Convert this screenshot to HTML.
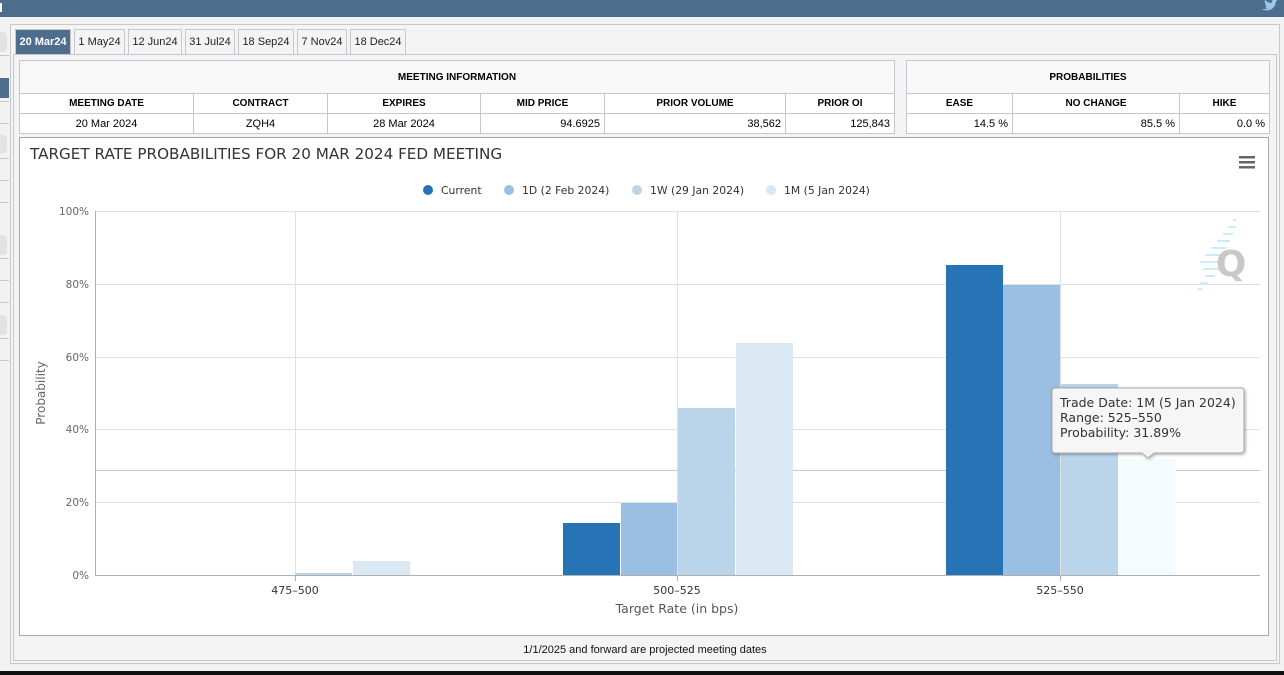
<!DOCTYPE html>
<html><head><meta charset="utf-8"><style>
*{margin:0;padding:0;box-sizing:border-box}
body{width:1284px;height:675px;background:#f2f2f2;position:relative;overflow:hidden;font-family:"Liberation Sans",Arial,sans-serif;color:#000}
.abs{position:absolute}
.tab{position:absolute;top:29px;height:25px;border:1px solid #c8c8cc;border-bottom:none;background:#f4f4f4;font-size:11px;line-height:24px;text-align:center;color:#222}
.tab.on{background:#4e6d8c;color:#fff;font-weight:bold}
table{border-collapse:collapse;position:absolute;background:#fff;font-size:11px}
td{border:1px solid #c6c6cc;text-align:center;height:20px;padding:0 4px}
.h td{font-weight:bold;font-size:10px}
.r{text-align:right}
</style></head><body>
<div class="abs" style="left:0;top:0;width:1284px;height:17px;background:#4e6d8c"></div>
<div class="abs" style="left:0;top:3px;width:2px;height:9px;background:#fff"></div>
<svg class="abs" style="left:1261px;top:0" width="18" height="12" viewBox="0 0 18 12"><path d="M1 9c3 2 8 2 11-1 2-2 3-5 3-7l2-1-2 0c-1-1-3-1-4 1-1 1 0 2 0 2-3 0-5-1-7-3-1 2 0 3 1 4H4c0 1 1 2 2 3H4c1 1 2 1 3 1-2 1-4 1-6 1z" fill="#9cc7ea"/></svg>
<div class="abs" style="left:0;top:32px;width:7px;height:20px;background:#e2e2e2;border-radius:0 4px 4px 0"></div>
<div class="abs" style="left:0;top:55px;width:9px;height:1px;background:#c8c8c8"></div>
<div class="abs" style="left:0;top:78px;width:9px;height:20px;background:#4e6d8c"></div>
<div class="abs" style="left:0;top:101px;width:9px;height:1px;background:#c8c8c8"></div>
<div class="abs" style="left:0;top:123px;width:9px;height:1px;background:#c8c8c8"></div>
<div class="abs" style="left:0;top:135px;width:7px;height:18px;background:#e2e2e2;border-radius:0 4px 4px 0"></div>
<div class="abs" style="left:0;top:158px;width:9px;height:1px;background:#c8c8c8"></div>
<div class="abs" style="left:0;top:180px;width:9px;height:1px;background:#c8c8c8"></div>
<div class="abs" style="left:0;top:202px;width:9px;height:1px;background:#c8c8c8"></div>
<div class="abs" style="left:0;top:235px;width:7px;height:20px;background:#e2e2e2;border-radius:0 4px 4px 0"></div>
<div class="abs" style="left:0;top:258px;width:9px;height:1px;background:#c8c8c8"></div>
<div class="abs" style="left:0;top:280px;width:9px;height:1px;background:#c8c8c8"></div>
<div class="abs" style="left:0;top:302px;width:9px;height:1px;background:#c8c8c8"></div>
<div class="abs" style="left:0;top:315px;width:7px;height:20px;background:#e2e2e2;border-radius:0 4px 4px 0"></div>
<div class="abs" style="left:0;top:338px;width:9px;height:1px;background:#c8c8c8"></div>
<div class="abs" style="left:0;top:360px;width:9px;height:1px;background:#c8c8c8"></div>
<div class="abs" style="left:10px;top:24px;width:1270px;height:640px;border:1px solid #c8c8cc;background:#f4f4f4"></div>
<div class="abs" style="left:13px;top:54px;width:1264px;height:607px;border:1px solid #c8c8cc;background:#f4f4f4"></div>
<div class="tab on" style="left:15px;width:56px">20 Mar24</div>
<div class="tab" style="left:74px;width:51px">1 May24</div>
<div class="tab" style="left:128px;width:54px">12 Jun24</div>
<div class="tab" style="left:185px;width:50px">31 Jul24</div>
<div class="tab" style="left:238px;width:56px">18 Sep24</div>
<div class="tab" style="left:297px;width:50px">7 Nov24</div>
<div class="tab" style="left:350px;width:56px">18 Dec24</div>
<table style="left:19px;top:60px;width:876px">
<tr class="h"><td colspan="6" style="height:33px;background:#f8f8f8">MEETING INFORMATION</td></tr>
<tr class="h"><td style="width:174px">MEETING DATE</td><td style="width:134px">CONTRACT</td><td style="width:153px">EXPIRES</td><td style="width:124px">MID PRICE</td><td style="width:181px">PRIOR VOLUME</td><td>PRIOR OI</td></tr>
<tr><td>20 Mar 2024</td><td>ZQH4</td><td>28 Mar 2024</td><td class="r">94.6925</td><td class="r">38,562</td><td class="r">125,843</td></tr>
</table>
<table style="left:906px;top:60px;width:364px">
<tr class="h"><td colspan="3" style="height:33px;background:#f8f8f8">PROBABILITIES</td></tr>
<tr class="h"><td style="width:106px">EASE</td><td style="width:167px">NO CHANGE</td><td>HIKE</td></tr>
<tr><td class="r">14.5 %</td><td class="r">85.5 %</td><td class="r">0.0 %</td></tr>
</table>
<div class="abs" style="left:19px;top:137px;width:1250px;height:499px;background:#fff;border:1px solid #a8a8a8"></div>
<svg class="abs" style="left:0;top:0" width="1284" height="675" font-family="DejaVu Sans, sans-serif">
<text x="30" y="159" font-size="15.2" fill="#333">TARGET RATE PROBABILITIES FOR 20 MAR 2024 FED MEETING</text>
<g fill="#666"><rect x="1239" y="156" width="16" height="2.5"/><rect x="1239" y="161" width="16" height="2.5"/><rect x="1239" y="166" width="16" height="2.5"/></g>
<g font-size="10.8" fill="#333">
<circle cx="428" cy="190" r="5" fill="#2673b5"/><text x="441" y="194">Current</text>
<circle cx="509" cy="190" r="5" fill="#9bbfe3"/><text x="522" y="194">1D (2 Feb 2024)</text>
<circle cx="637" cy="190" r="5" fill="#bad5ea"/><text x="650" y="194">1W (29 Jan 2024)</text>
<circle cx="771" cy="190" r="5" fill="#dae8f4"/><text x="784" y="194">1M (5 Jan 2024)</text>
</g>
<g stroke="#e0e0e0" stroke-width="1">
<line x1="95" y1="211.5" x2="1260" y2="211.5"/><line x1="95" y1="284.5" x2="1260" y2="284.5"/><line x1="95" y1="357.5" x2="1260" y2="357.5"/><line x1="95" y1="429.5" x2="1260" y2="429.5"/><line x1="95" y1="502.5" x2="1260" y2="502.5"/>
<line x1="295.5" y1="211" x2="295.5" y2="575"/><line x1="677.5" y1="211" x2="677.5" y2="575"/><line x1="1060.5" y1="211" x2="1060.5" y2="575"/>
</g>
<line x1="95" y1="470.5" x2="1260" y2="470.5" stroke="#c8c8c8"/>
<g fill="#666" font-size="10.5" text-anchor="end">
<text x="89" y="215">100%</text><text x="89" y="288">80%</text><text x="89" y="361">60%</text><text x="89" y="433">40%</text><text x="89" y="506">20%</text><text x="89" y="579">0%</text></g>
<text transform="translate(45,393) rotate(-90)" text-anchor="middle" font-size="12" fill="#666">Probability</text>
<rect x="295" y="573" width="57" height="2" fill="#bad5ea"/>
<rect x="353" y="561" width="57" height="14" fill="#dae8f4"/>
<rect x="563" y="523" width="57" height="52" fill="#2673b5"/>
<rect x="621" y="503" width="56" height="72" fill="#9bbfe3"/>
<rect x="678" y="408" width="57" height="167" fill="#bad5ea"/>
<rect x="736" y="343" width="57" height="232" fill="#dae8f4"/>
<rect x="946" y="265" width="57" height="310" fill="#2673b5"/>
<rect x="1003" y="285" width="57" height="290" fill="#9bbfe3"/>
<rect x="1061" y="384" width="57" height="191" fill="#bad5ea"/>
<rect x="1118" y="459" width="58" height="116" fill="#f5fcff"/>
<line x1="95.5" y1="211" x2="95.5" y2="575" stroke="#b0b0b0"/>
<line x1="95" y1="575.5" x2="1260" y2="575.5" stroke="#b0b0b0"/>
<g stroke="#b0b0b0"><line x1="295.5" y1="575" x2="295.5" y2="581"/><line x1="677.5" y1="575" x2="677.5" y2="581"/><line x1="1060.5" y1="575" x2="1060.5" y2="581"/></g>
<g font-size="11" fill="#333" text-anchor="middle"><text x="295" y="594">475–500</text><text x="677" y="594">500–525</text><text x="1060" y="594">525–550</text></g>
<text x="677" y="613" font-size="12.5" fill="#555" text-anchor="middle">Target Rate (in bps)</text>
<g fill="#c8ecfa"><rect x="1233" y="219" width="3" height="2"/><rect x="1228" y="226" width="8" height="2"/><rect x="1223" y="233" width="10" height="2"/><rect x="1217" y="240" width="13" height="2"/><rect x="1211" y="247" width="16" height="2"/><rect x="1205" y="254" width="18" height="2"/><rect x="1200" y="261" width="20" height="2"/><rect x="1203" y="268" width="16" height="2"/><rect x="1205" y="275" width="10" height="2"/><rect x="1200" y="282" width="8" height="2"/><rect x="1198" y="288" width="4" height="2"/></g>
<text x="1231" y="276" font-size="36" font-weight="bold" fill="#c8c8c8" text-anchor="middle">Q</text>
<defs><filter id="s" x="-10%" y="-20%" width="130%" height="150%"><feDropShadow dx="1" dy="1" stdDeviation="1.5" flood-opacity="0.35"/></filter></defs>
<g filter="url(#s)"><path d="M1055 388h186a3 3 0 0 1 3 3v59a3 3 0 0 1-3 3h-87l-6 5-6-5h-87a3 3 0 0 1-3-3v-59a3 3 0 0 1 3-3z" fill="#f6f6f6" stroke="#aaa"/></g>
<g font-size="12.5" fill="#333"><text x="1060" y="407">Trade Date: 1M (5 Jan 2024)</text><text x="1060" y="422">Range: 525–550</text><text x="1060" y="437">Probability: 31.89%</text></g>
</svg>
<div class="abs" style="left:0;top:644px;width:1290px;text-align:center;font-size:11px;color:#111">1/1/2025 and forward are projected meeting dates</div>
<div class="abs" style="left:0;top:671px;width:1284px;height:4px;background:#111"></div>
</body></html>
